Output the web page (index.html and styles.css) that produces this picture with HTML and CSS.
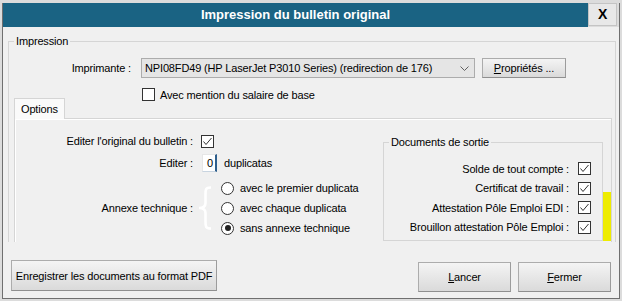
FILE: index.html
```html
<!DOCTYPE html>
<html lang="fr">
<head>
    <meta charset="UTF-8">
    <title>Impression du bulletin original</title>
    <link rel="stylesheet" href="styles.css">
</head>
<body>
    <div class="window">
        <!-- barre de titre -->
        <div class="titlebar">
            <div class="title">Impression du bulletin original</div>
            <div class="close">X</div>
        </div>

        <div class="content">
            <fieldset class="group group-print">
                <legend>Impression</legend>

                <div class="printer-row">
                    <span class="row-label">Imprimante :</span>
                    <div class="select">
                        <span>NPI08FD49 (HP LaserJet P3010 Series) (redirection de 176)</span>
                        <svg width="9" height="5" viewBox="0 0 9 5"><path d="M0.5 0.5 L4.5 4.5 L8.5 0.5" fill="none" stroke="#606060"/></svg>
                    </div>
                    <button class="btn btn-props"><u>P</u>ropriétés ...</button>
                </div>

                <div class="check-row">
                    <span class="checkbox"></span>
                    <span>Avec mention du salaire de base</span>
                </div>

                <div class="tabs">
                    <div class="tab">Options</div>
                </div>

                <div class="tab-panel">
                    <div class="options">
                        <div class="opt-row">
                            <span class="opt-label">Editer l'original du bulletin :</span>
                            <span class="checkbox"><svg width="11" height="11" viewBox="0 0 11 11"><path d="M1.5 5.5 L4 8.5 L9.5 2" fill="none" stroke="#333"/></svg></span>
                        </div>
                        <div class="opt-row opt-row-num">
                            <span class="opt-label">Editer :</span>
                            <span class="input-num">0</span>
                            <span class="suffix">duplicatas</span>
                        </div>
                        <div class="opt-row opt-row-annexe">
                            <span class="opt-label">Annexe technique :</span>
                            <svg class="brace" width="16" height="44" viewBox="0 0 16 44"><path d="M14 1.5 C8 1.5 8.5 4 8.5 10 L8.5 17 C8.5 20 6.5 22 2 22 C6.5 22 8.5 24 8.5 27 L8.5 34 C8.5 40 8 42.5 14 42.5" fill="none" stroke="#fff" stroke-width="2.6"/></svg>
                            <div class="radios">
                                <div class="radio-row"><span class="radio"></span>avec le premier duplicata</div>
                                <div class="radio-row"><span class="radio"></span>avec chaque duplicata</div>
                                <div class="radio-row"><span class="radio checked"></span>sans annexe technique</div>
                            </div>
                        </div>
                    </div>

                    <fieldset class="group group-docs">
                        <legend>Documents de sortie</legend>
                        <div class="doc-row">Solde de tout compte : <span class="checkbox"><svg width="11" height="11" viewBox="0 0 11 11"><path d="M1.5 5.5 L4 8.5 L9.5 2" fill="none" stroke="#333"/></svg></span></div>
                        <div class="doc-row">Certificat de travail : <span class="checkbox"><svg width="11" height="11" viewBox="0 0 11 11"><path d="M1.5 5.5 L4 8.5 L9.5 2" fill="none" stroke="#333"/></svg></span></div>
                        <div class="doc-row">Attestation Pôle Emploi EDI : <span class="checkbox"><svg width="11" height="11" viewBox="0 0 11 11"><path d="M1.5 5.5 L4 8.5 L9.5 2" fill="none" stroke="#333"/></svg></span></div>
                        <div class="doc-row">Brouillon attestation Pôle Emploi : <span class="checkbox"><svg width="11" height="11" viewBox="0 0 11 11"><path d="M1.5 5.5 L4 8.5 L9.5 2" fill="none" stroke="#333"/></svg></span></div>
                    </fieldset>
                </div>
            </fieldset>
        </div>

        <!-- boutons -->
        <div class="footer">
            <button class="btn btn-pdf">Enregistrer les documents au format PDF</button>
            <button class="btn btn-main btn-run"><u>L</u>ancer</button>
            <button class="btn btn-main"><u>F</u>ermer</button>
        </div>

        <div class="marker"></div>
    </div>
</body>
</html>
```

FILE: styles.css
```css
html, body { margin: 0; height: 100%; }
body {
    background: #dcdcdc;
    font: 11px "Liberation Sans", Arial, sans-serif;
    letter-spacing: -0.15px;
    color: #000;
}
.window {
    position: relative;
    display: flex;
    flex-direction: column;
    height: 295px;
    margin: 3px 2px 2px;
    border: 1px solid #6f6f6f;
    border-top: none;
    background: #f0f0f0;
}

/* titre */
.titlebar { display: flex; height: 24px; flex: none; background: #dcdcdc; }
.title {
    flex: 1;
    background: #1a6383;
    color: #fff;
    font: bold 13px "Liberation Sans", Arial, sans-serif;
    letter-spacing: 0;
    line-height: 24px;
    text-align: center;
}
.close {
    width: 29px;
    height: 23px;
    margin-right: 2px;
    box-sizing: border-box;
    border: 1px solid #c4c4c4;
    background: #e8e8e8;
    font: bold 14px "Liberation Sans", Arial, sans-serif;
    line-height: 21px;
    text-align: center;
}

/* zone principale */
.content { height: 215px; flex: none; overflow: hidden; }
.group {
    margin: 0;
    padding: 0;
    min-width: 0;
    border: 1px solid #d5d5d5;
}
.group legend { margin-left: 5px; padding: 0 2px; line-height: 14px; }
.group-print { margin: 7px 3px 0 5px; }

.printer-row { display: flex; align-items: center; height: 20px; margin-top: 10px; }
.row-label { width: 122px; margin-right: 10px; text-align: right; }
.select {
    display: flex;
    align-items: center;
    justify-content: space-between;
    width: 334px;
    height: 20px;
    box-sizing: border-box;
    padding: 0 5px 0 3px;
    border: 1px solid #acacac;
    background: #e5e5e5;
}

.btn {
    padding: 0;
    font: inherit;
    letter-spacing: inherit;
    color: #000;
    background: linear-gradient(#f4f4f4, #dadada);
    border: 1px solid #acacac;
    border-bottom-color: #8f8f8f;
    border-right-color: #9c9c9c;
    border-radius: 0;
}
.btn-props { width: 84px; height: 20px; margin-left: 7px; }

.checkbox {
    display: flex;
    align-items: center;
    justify-content: center;
    flex: none;
    width: 13px;
    height: 13px;
    box-sizing: border-box;
    border: 1px solid #333;
    background: #fff;
}
.check-row { display: flex; align-items: center; gap: 5px; height: 13px; margin: 10px 0 0 133px; }

/* onglet */
.tabs { position: relative; z-index: 1; display: flex; margin: -3px 0 0 5px; }
.tab {
    width: 51px;
    height: 21px;
    margin-bottom: -1px;
    box-sizing: border-box;
    padding: 3px 0 0 6px;
    border: 1px solid #d5d5d5;
    border-bottom: none;
    background: #fafafa;
    line-height: 14px;
}
.tab-panel {
    display: flex;
    align-items: flex-start;
    height: 140px;
    margin: 0 3px 0 5px;
    border: 1px solid #d5d5d5;
    box-shadow: inset 1px 1px #fff;
}

.options { padding-top: 12px; }
.opt-row { display: flex; align-items: center; height: 20px; }
.opt-row-num { margin-top: 2px; }
.opt-row-annexe { height: 60px; margin-top: 5px; }
.opt-label { width: 186px; flex: none; box-sizing: border-box; padding-right: 8px; text-align: right; }
.input-num {
    width: 15px;
    height: 18px;
    margin-left: 1px;
    box-sizing: border-box;
    padding-left: 4px;
    line-height: 17px;
    background: #fff;
    border: 1px solid #e6e6e6;
    border-right: 2px solid #2f5f8c;
    border-bottom-color: #c8d4e0;
}
.suffix { margin-left: 7px; }
.brace { margin-left: -4px; flex: none; }
.radios { margin-left: 8px; }
.radio-row { display: flex; align-items: center; gap: 6px; height: 20px; }
.radio {
    display: flex;
    align-items: center;
    justify-content: center;
    width: 13px;
    height: 13px;
    box-sizing: border-box;
    border: 1px solid #333;
    border-radius: 50%;
    background: #fff;
}
.radio.checked::after { content: ""; width: 6px; height: 6px; border-radius: 50%; background: #222; }

.group-docs {
    width: 220px;
    box-sizing: border-box;
    margin: 16px 8px 0 auto;
    padding: 10px 11px 3px 0;
}
.doc-row { display: flex; align-items: center; justify-content: flex-end; gap: 9px; height: 19.5px; }

/* bas */
.footer { display: flex; align-items: flex-start; padding: 18px 8px 0; }
.btn-pdf { width: 206px; height: 31px; }
.btn-main { width: 93px; height: 30px; margin-top: 2px; margin-left: 7px; }
.btn-run { margin-left: auto; }

.marker {
    position: absolute;
    left: 600px;
    top: 189px;
    width: 8px;
    height: 49px;
    background: #eeec00;
}
```
